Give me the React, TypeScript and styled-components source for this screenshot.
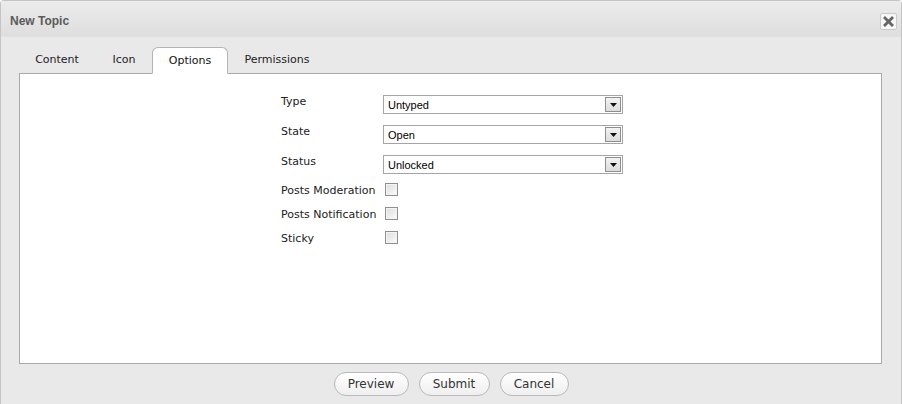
import React from "react";
import styled, { createGlobalStyle } from "styled-components";

const Global = createGlobalStyle`
  html, body { margin: 0; padding: 0; background: #fff; }
  body { width: 902px; height: 404px; overflow: hidden; }
`;

const Dialog = styled.div`
  box-sizing: border-box;
  width: 902px;
  height: 404px;
  border: 1px solid #c4c4c4;
  border-bottom: none;
  border-radius: 4px 4px 0 0;
  background: #e9e9e9;
  display: flex;
  flex-direction: column;
  font-family: "DejaVu Sans", Verdana, sans-serif;
`;

const Header = styled.div`
  height: 35px;
  flex: none;
  display: flex;
  align-items: center;
  justify-content: space-between;
  padding: 0 4px 0 9px;
  background: linear-gradient(#ececec, #dedede);
  border-bottom: 1px solid #e2e2e2;
`;

const Title = styled.div`
  font-family: "Liberation Sans", Arial, sans-serif;
  font-weight: bold;
  font-size: 12px;
  color: #5a5a5a;
  margin-top: 4px;
`;

const CloseBtn = styled.button`
  box-sizing: border-box;
  width: 17px;
  height: 17px;
  padding: 0;
  margin-top: 5px;
  border: 1px solid #c9c9c9;
  border-radius: 2px;
  background: #f6f6f6;
  display: flex;
  align-items: center;
  justify-content: center;
`;

const Body = styled.div`
  flex: 1;
  display: flex;
  flex-direction: column;
  padding: 10px 19px 0 18px;
`;

const TabBar = styled.div`
  display: flex;
  align-items: flex-end;
  height: 27px;
  margin: 0 0 -1px -1px;
  position: relative;
  z-index: 1;
`;

const Tab = styled.div<{ $active?: boolean; $w: number }>`
  box-sizing: border-box;
  width: ${(p) => p.$w}px;
  height: ${(p) => (p.$active ? 27 : 26)}px;
  display: flex;
  justify-content: center;
  align-items: flex-start;
  padding-top: ${(p) => (p.$active ? "6px" : "4px")};
  font-size: 11px;
  color: ${(p) => (p.$active ? "#111" : "#222")};
  background: ${(p) => (p.$active ? "#fff" : "transparent")};
  border: ${(p) => (p.$active ? "1px solid #b4b4b4" : "1px solid transparent")};
  border-bottom: ${(p) => (p.$active ? "1px solid #fff" : "none")};
  border-radius: 6px 6px 0 0;
`;

const Panel = styled.div`
  box-sizing: border-box;
  height: 291px;
  background: #fff;
  border: 1px solid #a9a9a9;
  display: flex;
  justify-content: center;
  padding-top: 21px;
`;

const Form = styled.div`
  display: grid;
  grid-template-columns: 102px 240px;
  align-content: start;
  margin-left: 3px;
`;

const Label = styled.div<{ $h: number; $pad: number }>`
  height: ${(p) => p.$h}px;
  font-size: 11px;
  color: #222;
  padding-top: ${(p) => p.$pad}px;
  box-sizing: border-box;
  white-space: nowrap;
`;

const Cell = styled.div<{ $h: number }>`
  height: ${(p) => p.$h}px;
`;

const Select = styled.div`
  box-sizing: border-box;
  width: 240px;
  height: 19px;
  border: 1px solid #a5a5a5;
  background: #fff;
  display: flex;
  align-items: center;
  justify-content: space-between;
  padding: 0 1px 0 4px;
  font-family: "Liberation Sans", Arial, sans-serif;
  font-size: 11px;
  color: #000;
`;

const Arrow = styled.div`
  box-sizing: border-box;
  width: 16px;
  height: 15px;
  border: 1px solid #8e8e8e;
  background: linear-gradient(#f3f3f3, #dcdcdc);
  display: flex;
  align-items: center;
  justify-content: center;
`;

const Check = styled.div`
  box-sizing: border-box;
  width: 13px;
  height: 13px;
  margin-left: 2px;
  border: 1px solid #8f8f8f;
  background: linear-gradient(135deg, #dcdcdc, #fbfbfb);
  box-shadow: inset 0 0 0 1px #f4f4f4;
`;

const Footer = styled.div`
  flex: 1;
  display: flex;
  justify-content: center;
  align-items: flex-start;
  gap: 10px;
  padding-top: 8px;
  padding-left: 1px;
`;

const Button = styled.button<{ $w: number }>`
  box-sizing: border-box;
  width: ${(p) => p.$w}px;
  height: 24px;
  border: 1px solid #b9b9b9;
  border-radius: 12px;
  background: linear-gradient(#ffffff, #efefef);
  font-family: "DejaVu Sans", Verdana, sans-serif;
  font-size: 12px;
  color: #333;
  padding: 0;
`;

const selects = [
  { label: "Type", value: "Untyped", h: 30 },
  { label: "State", value: "Open", h: 30 },
  { label: "Status", value: "Unlocked", h: 28 },
];
const checks = ["Posts Moderation", "Posts Notification", "Sticky"];

export default function App() {
  return (
    <>
      <Global />
      <Dialog>
        <Header>
          <Title>New Topic</Title>
          <CloseBtn aria-label="close">
            <svg width="13" height="13" viewBox="0 0 13 13">
              <path
                d="M1 3 L3 1 L6.5 4.5 L10 1 L12 3 L8.5 6.5 L12 10 L10 12 L6.5 8.5 L3 12 L1 10 L4.5 6.5 Z"
                fill="#666"
              />
            </svg>
          </CloseBtn>
        </Header>
        <Body>
          <TabBar>
            <Tab $w={78}>Content</Tab>
            <Tab $w={56}>Icon</Tab>
            <Tab $w={76} $active>Options</Tab>
            <Tab $w={98}>Permissions</Tab>
          </TabBar>
          <Panel>
            <Form>
              {selects.map((s) => (
                <React.Fragment key={s.label}>
                  <Label $h={s.h} $pad={0}>{s.label}</Label>
                  <Cell $h={s.h}>
                    <Select>
                      <span>{s.value}</span>
                      <Arrow>
                        <svg width="7" height="4" viewBox="0 0 7 4">
                          <path d="M0 0 H7 L3.5 4 Z" fill="#111" />
                        </svg>
                      </Arrow>
                    </Select>
                  </Cell>
                </React.Fragment>
              ))}
              {checks.map((c) => (
                <React.Fragment key={c}>
                  <Label $h={24} $pad={1}>{c}</Label>
                  <Cell $h={24}>
                    <Check />
                  </Cell>
                </React.Fragment>
              ))}
            </Form>
          </Panel>
          <Footer>
            <Button $w={75}>Preview</Button>
            <Button $w={71}>Submit</Button>
            <Button $w={69}>Cancel</Button>
          </Footer>
        </Body>
      </Dialog>
    </>
  );
}
